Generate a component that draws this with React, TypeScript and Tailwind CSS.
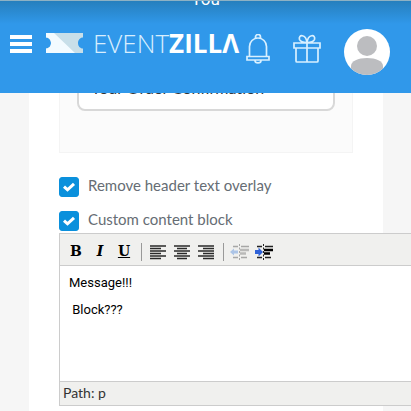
import { useState } from 'react';
import type { ReactNode } from 'react';

interface CheckFieldProps {
  label: string;
}

function CheckField({ label }: CheckFieldProps) {
  const [checked, setChecked] = useState(true);

  return (
    <label className="flex h-5 items-center gap-[9px]">
      <span className="relative h-5 w-5 shrink-0">
        <input
          type="checkbox"
          checked={checked}
          onChange={(e) => setChecked(e.target.checked)}
          className="block h-5 w-5 appearance-none rounded-[3px] border border-[#0a90dc] bg-white checked:bg-[#0a90dc]"
        />
        <svg
          viewBox="0 0 20 20"
          className="pointer-events-none absolute inset-0 h-5 w-5"
          fill="none"
          stroke="#fff"
          strokeWidth="3"
        >
          <path d="M5 9.6 8.5 12.8 15 6.8" />
        </svg>
      </span>
      <span className="whitespace-nowrap pb-1 text-[15px] leading-5 text-[#666d74]">
        {label}
      </span>
    </label>
  );
}

interface ToolButtonProps {
  label: string;
  children: ReactNode;
}

function ToolButton({ label, children }: ToolButtonProps) {
  return (
    <button
      type="button"
      aria-label={label}
      className="flex h-6 w-6 items-center justify-center font-['DejaVu_Serif',serif] text-[14px] font-bold text-black"
    >
      {children}
    </button>
  );
}

function Separator() {
  return (
    <span className="flex w-2.5 justify-center">
      <span className="h-[18px] w-px bg-[#999]" />
    </span>
  );
}

function AlignIcon({ d }: { d: string }) {
  return (
    <svg width="18" height="16" viewBox="0 0 18 16" stroke="#2a2a2a" strokeWidth="1.7">
      <path d={d} />
    </svg>
  );
}

function IndentIcon({ outdent = false }: { outdent?: boolean }) {
  return (
    <svg
      width="20"
      height="18"
      viewBox="0 0 20 18"
      fill="none"
      opacity={outdent ? 0.35 : 1}
    >
      <path
        d="M3 3.5h5M11 3.5h8M3 14.5h5M11 14.5h6"
        stroke="#222"
        strokeWidth="1.6"
      />
      <path
        d="M10 7h9M10 10.5h6"
        stroke={outdent ? '#555' : '#000'}
        strokeWidth="2.6"
      />
      <path d="M9.5 1v16" stroke="#222" strokeDasharray="2 1.5" />
      {outdent ? (
        <path d="M0 9l4-3.500v2h4v3H4v2z" fill="#2f74d8" />
      ) : (
        <path d="M9 9 4.500 4.500V7H1v4h3.500v2.500z" fill="#2f62d8" />
      )}
    </svg>
  );
}

function Header() {
  return (
    <header className="relative z-10 flex h-[93px] items-center overflow-hidden border-t border-[#8db1c4] bg-[#3098ea] bg-linear-to-b from-[#267fbd] to-[#3098ea] to-25% pl-2.5 pr-[21px] text-white">
      <p className="absolute inset-x-0 -top-3 text-center font-[Roboto,sans-serif] text-[17px] leading-5">
        You
      </p>
      <button type="button" aria-label="Menu" className="shrink-0">
        <svg width="22" height="18" viewBox="0 0 22 18" fill="#fff" className="-mt-1.5">
          <path d="M0 0h22v4H0zM0 7h22v4H0zM0 14h22v4H0z" />
        </svg>
      </button>
      <a
        href="#home"
        className="mb-2 ml-3.5 flex items-center whitespace-nowrap font-['Open_Sans',sans-serif] text-[26px] leading-8"
      >
        <svg width="37" height="20" viewBox="0 0 37 20" className="mr-2.5">
          <path
            d="M0 0h37v4.500c-3 0-5 2.500-5 5.500s2 5.500 5 5.500V20H0v-4.500c3 0 5-2.500 5-5.500S3 4.500 0 4.500z"
            fill="#c8dfe9"
          />
          <path
            d="M0 0h8l21 20H0v-4.500c3 0 5-2.500 5-5.500S3 4.500 0 4.500z"
            fill="#f3fbff"
          />
        </svg>
        <span className="font-light text-[#d8eefe]">EVENT</span>
        <span className="font-bold">ZILLΛ</span>
      </a>
      <div className="ml-auto flex shrink-0 items-center">
        <button type="button" aria-label="Notifications" className="mt-1">
          <svg
            width="24"
            height="30"
            viewBox="0 0 24 30"
            fill="none"
            stroke="#d8f0ff"
            strokeWidth="1.7"
          >
            <path d="M3.500 22.500V12.500a8.500 8.500 0 0 1 17 0v10M1 22.500h22v3.500H1zM9.500 4V3a2.500 2.500 0 0 1 5 0v1M9 26.500a3 2.400 0 0 0 6 0" />
          </svg>
        </button>
        <button type="button" aria-label="Gifts" className="ml-[23px] mt-1">
          <svg
            width="28"
            height="30"
            viewBox="0 0 28 30"
            fill="none"
            stroke="#d8f0ff"
            strokeWidth="1.7"
          >
            <path d="M1 9h26v5H1zM3 14v13a1 1 0 0 0 1 1h20a1 1 0 0 0 1-1V14M14 9v19M14 8.500C13 0 5 0 6.500 5.500 7.500 8 11 8.500 14 8.500M14 8.500C15 0 23 0 21.500 5.500 20.500 8 17 8.500 14 8.500" />
          </svg>
        </button>
        <button
          type="button"
          aria-label="Account"
          className="ml-[23px] mt-2.5 overflow-hidden rounded-full bg-white"
        >
          <svg width="46" height="46" viewBox="0 0 46 46" fill="#bcbdc0">
            <circle cx="23" cy="17" r="10" />
            <path d="M7 37c0-5 7-8 16-8s16 3 16 8v9H7z" />
          </svg>
        </button>
      </div>
    </header>
  );
}

function Editor() {
  return (
    <section
      aria-label="Content block editor"
      className="-mr-[60px] mt-0.5 border border-[#ccc]"
    >
      <div
        role="toolbar"
        className="flex h-8 items-center border-b border-[#ccc] bg-[#f0f0ee] pl-1 pt-1"
      >
        <ToolButton label="Bold">B</ToolButton>
        <ToolButton label="Italic">
          <span className="italic">I</span>
        </ToolButton>
        <ToolButton label="Underline">
          <span className="underline">U</span>
        </ToolButton>
        <Separator />
        <ToolButton label="Align left">
          <AlignIcon d="M1 2h16M1 4.500h11M1 7h16M1 9.500h11M1 12h16M1 14.500h11" />
        </ToolButton>
        <ToolButton label="Align center">
          <AlignIcon d="M1 2h16M4 4.500h10M1 7h16M4 9.500h10M1 12h16M4 14.500h10" />
        </ToolButton>
        <ToolButton label="Align right">
          <AlignIcon d="M1 2h16M6 4.500h11M1 7h16M6 9.500h11M1 12h16M6 14.500h11" />
        </ToolButton>
        <Separator />
        <ToolButton label="Outdent">
          <IndentIcon outdent />
        </ToolButton>
        <ToolButton label="Indent">
          <IndentIcon />
        </ToolButton>
      </div>
      <textarea
        aria-label="Message"
        defaultValue={'Message!!!\n Block???'}
        className="block h-[115px] w-full resize-none bg-white pl-[9px] pt-[3px] font-[Roboto,sans-serif] text-[13px] leading-[27px] text-black outline-none"
      />
      <div className="h-6 border-t border-[#ccc] bg-[#f0f0ee] pl-[3px] text-[14px] leading-[22px] text-[#333]">
        Path: p
      </div>
    </section>
  );
}

export default function App() {
  return (
    <div className="flex min-h-screen flex-col overflow-hidden bg-[#f6f6f6] font-[Lato,sans-serif]">
      <Header />
      <main className="-mt-9 ml-[29px] mr-7 flex-1 bg-white px-[30px] pb-1.5">
        <div className="border border-[#f4f4f4] bg-[#fbfbfb] px-[17px] pb-[41px] pt-2.5">
          <input
            type="text"
            aria-label="Title"
            defaultValue="Your Order Confirmation"
            className="block h-[43px] w-full rounded-lg border-2 border-[#d8d8d8] bg-white px-3 pb-1 text-[16px] text-[#333]"
          />
        </div>
        <div className="mt-6 flex flex-col gap-3.5">
          <CheckField label="Remove header text overlay" />
          <CheckField label="Custom content block" />
        </div>
        <Editor />
      </main>
    </div>
  );
}
